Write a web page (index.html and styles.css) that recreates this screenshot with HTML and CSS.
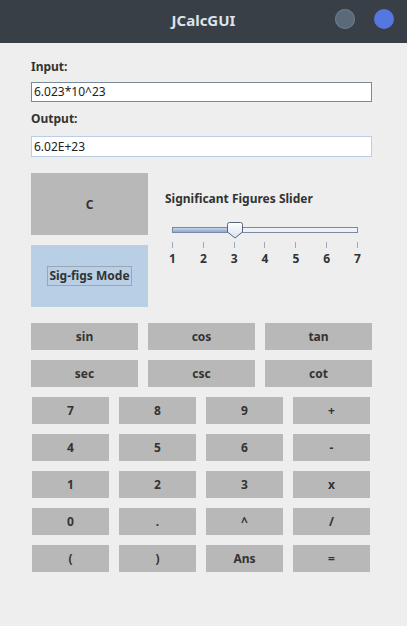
FILE: index.html
```html
<!DOCTYPE html>
<html>
<head>
<meta charset="utf-8">
<link rel="stylesheet" href="styles.css">
</head>
<body>
<div class="titlebar">
  <div class="title">JCalcGUI</div>
  <div class="winbtns">
    <span class="wb wb-min"></span>
    <span class="wb wb-max"></span>
  </div>
</div>
<div class="main">
  <div class="label">Input:</div>
  <div class="field field-focus">6.023*10^23</div>
  <div class="label label-out">Output:</div>
  <div class="field">6.02E+23</div>

  <div class="mid">
    <div class="leftcol">
      <div class="btn big">C</div>
      <div class="btn big sel"><span class="focus">Sig-figs Mode</span></div>
    </div>
    <div class="slidercol">
      <div class="slabel">Significant Figures Slider</div>
      <div class="slider">
        <div class="track"><div class="fill"></div></div>
        <svg class="thumb" width="16" height="17" viewBox="0 0 16 17">
          <defs>
            <linearGradient id="tg" x1="0" y1="0" x2="0" y2="1">
              <stop offset="0" stop-color="#ffffff"/>
              <stop offset="1" stop-color="#d6e2ee"/>
            </linearGradient>
          </defs>
          <path d="M2.5 0.5 H13.5 Q15.5 0.5 15.5 2.5 V10 L8 16 L0.5 10 V2.5 Q0.5 0.5 2.5 0.5 Z" fill="url(#tg)" stroke="#5a6478" stroke-width="1"/>
        </svg>
      </div>
      <div class="ticks">
        <span></span><span></span><span></span><span></span><span></span><span></span><span></span>
      </div>
      <div class="nums">
        <span>1</span><span>2</span><span>3</span><span>4</span><span>5</span><span>6</span><span>7</span>
      </div>
    </div>
  </div>

  <div class="trig">
    <div class="btn">sin</div><div class="btn">cos</div><div class="btn">tan</div>
    <div class="btn">sec</div><div class="btn">csc</div><div class="btn">cot</div>
  </div>

  <div class="pad">
    <div class="btn">7</div><div class="btn">8</div><div class="btn">9</div><div class="btn">+</div>
    <div class="btn">4</div><div class="btn">5</div><div class="btn">6</div><div class="btn">-</div>
    <div class="btn">1</div><div class="btn">2</div><div class="btn">3</div><div class="btn">x</div>
    <div class="btn">0</div><div class="btn">.</div><div class="btn">^</div><div class="btn">/</div>
    <div class="btn">(</div><div class="btn">)</div><div class="btn">Ans</div><div class="btn">=</div>
  </div>
</div>
</body>
</html>
```
FILE: styles.css
```css
html, body {
  margin: 0;
  padding: 0;
}
body {
  width: 407px;
  height: 626px;
  background: #eeeeee;
  font-family: "Noto Sans", "Open Sans", sans-serif;
  color: #333333;
  overflow: hidden;
}
.titlebar {
  height: 43px;
  background: #393f47;
  position: relative;
  display: flex;
  align-items: center;
  justify-content: center;
}
.title {
  color: #dde3ea;
  font-weight: bold;
  font-size: 15px;
  margin-top: -3px;
}
.winbtns {
  position: absolute;
  right: 13px;
  top: 9px;
  display: flex;
  gap: 19px;
}
.wb {
  display: block;
  width: 20px;
  height: 20px;
  border-radius: 50%;
}
.wb-min {
  background: #5b6a78;
  box-shadow: inset 0 0 0 1px #6c7a88;
}
.wb-max {
  background: #5577e0;
}
.main {
  padding: 14px 0 0 31px;
}
.label {
  height: 20px;
  line-height: 20px;
  font-size: 12px;
  font-weight: bold;
  margin-bottom: 5px;
}
.label-out {
  margin-top: 7px;
  margin-bottom: 7px;
}
.field {
  box-sizing: border-box;
  width: 341px;
  height: 21px;
  border: 1px solid #b8cfe5;
  background: #ffffff;
  font-size: 12px;
  line-height: 19px;
  padding-left: 2px;
  color: #222222;
}
.field-focus {
  border-color: #7a8a99;
  height: 20px;
  line-height: 18px;
}
.mid {
  display: flex;
  margin-top: 16px;
}
.leftcol {
  display: flex;
  flex-direction: column;
  gap: 10px;
  width: 117px;
}
.btn {
  background: #b8b8b8;
  height: 27px;
  display: flex;
  align-items: center;
  justify-content: center;
  font-size: 12px;
  font-weight: bold;
  color: #333333;
}
.btn.big {
  height: 62px;
}
.btn.sel {
  background: #b8cfe5;
}
.focus {
  border: 1px solid #9aa6b4;
  padding: 0 1px;
  line-height: 18px;
}
.slidercol {
  margin-left: 17px;
  width: 200px;
}
.slabel {
  font-size: 12px;
  font-weight: bold;
  margin-top: 16px;
  height: 20px;
  line-height: 20px;
}
.slider {
  position: relative;
  margin-top: 13px;
  margin-left: 7px;
  width: 186px;
  height: 16px;
}
.track {
  position: absolute;
  left: 0;
  top: 5px;
  width: 186px;
  height: 6px;
  box-sizing: border-box;
  border: 1px solid #7a8aa6;
  background: #eef0f3;
}
.fill {
  width: 58px;
  height: 100%;
  background: linear-gradient(#c4d6ea, #8ea9cc);
}
.thumb {
  position: absolute;
  left: 55px;
  top: 0;
}
.ticks {
  display: flex;
  justify-content: space-between;
  margin-left: 7px;
  width: 186px;
  height: 6px;
  margin-top: 4px;
}
.ticks span {
  display: block;
  width: 1px;
  height: 6px;
  background: #9aaabb;
}
.nums {
  display: flex;
  justify-content: space-between;
  width: 194px;
  margin-left: 3px;
  margin-top: 3px;
  font-size: 12px;
  font-weight: bold;
  line-height: 16px;
}
.nums span {
  width: 9px;
  text-align: center;
}
.trig {
  display: grid;
  grid-template-columns: repeat(3, 107px);
  column-gap: 10px;
  row-gap: 10px;
  margin-top: 16px;
}
.pad {
  display: grid;
  grid-template-columns: repeat(4, 77px);
  column-gap: 10px;
  row-gap: 10px;
  margin-top: 10px;
  margin-left: 1px;
}
```
